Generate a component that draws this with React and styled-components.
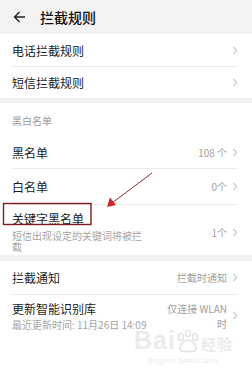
import styled, { createGlobalStyle } from "styled-components";

const GlobalStyle = createGlobalStyle`
  html, body {
    margin: 0;
    padding: 0;
    background: #f1f1f1;
  }
  body {
    font-family: "Noto Sans CJK SC", "Noto Sans", Roboto, sans-serif;
    color: #1c1c1c;
  }
`;

const Page = styled.div`
  position: relative;
  width: 252px;
  height: 385px;
  overflow: hidden;
  display: flex;
  flex-direction: column;
  background: #f1f1f1;
`;

const Header = styled.div`
  height: 34px;
  display: flex;
  align-items: center;
  padding-left: 13px;
  gap: 14px;
  background: #f3f3f3;
`;

const Title = styled.span`
  font-size: 14px;
  font-weight: 500;
  line-height: 1;
  color: #111;
`;

const Card = styled.div`
  background: #fff;
  margin-bottom: ${(p) => p.$gap || 0}px;
  flex: ${(p) => (p.$fill ? 1 : "none")};
  position: relative;
`;

const SectionLabel = styled.div`
  height: 34px;
  padding-left: 12px;
  display: flex;
  align-items: center;
  font-size: 10px;
  color: #9a9a9a;
`;

const Row = styled.div`
  height: ${(p) => p.$h}px;
  margin: 0 14px 0 12px;
  display: flex;
  align-items: center;
  justify-content: space-between;
  border-bottom: ${(p) => (p.$last ? "none" : "1px solid #ececec")};
`;

const Left = styled.div`
  display: flex;
  flex-direction: column;
  margin-top: ${(p) => p.$mt || 0}px;
`;

const Label = styled.span`
  font-size: 12px;
  line-height: 17px;
  color: #1c1c1c;
`;

const Sub = styled.span`
  max-width: ${(p) => (p.$wrap ? "136px" : "none")};
  font-size: 10px;
  line-height: ${(p) => (p.$wrap ? 11 : 14)}px;
  margin-top: ${(p) => p.$mt || 0}px;
  color: #a4a4a4;
  white-space: ${(p) => (p.$wrap ? "normal" : "nowrap")};
`;

const Right = styled.div`
  display: flex;
  align-items: center;
  gap: 5px;
  font-size: 10px;
  line-height: ${(p) => p.$lh || 13}px;
  color: #a0a0a0;
  text-align: right;
  margin-top: ${(p) => p.$mt || 0}px;
`;

const Annotation = styled.svg`
  position: absolute;
  left: 0;
  top: 0;
  pointer-events: none;
`;

const Watermark = styled.div`
  position: absolute;
  left: 134px;
  top: 328px;
  display: flex;
  flex-direction: column;
  align-items: center;
  color: #ebebeb;
  font-family: "Liberation Sans", sans-serif;
`;

const MarkTop = styled.div`
  display: flex;
  align-items: flex-end;
  font-size: 25px;
  font-weight: 700;
  line-height: 1;
  letter-spacing: 1px;
`;

const MarkCn = styled.span`
  font-family: "Noto Sans CJK SC", sans-serif;
  font-size: 15px;
  font-weight: 700;
  line-height: 1.2;
  margin-left: 1px;
`;

const MarkUrl = styled.span`
  font-size: 8px;
  margin-top: 3px;
  letter-spacing: 0.3px;
`;

const Chevron = () => (
  <svg width="6" height="9" viewBox="0 0 6 9">
    <polyline points="1.5,1 4.5,4.5 1.5,8" fill="none" stroke="#bdbdbd" strokeWidth="1.1" />
  </svg>
);

const BackArrow = () => (
  <svg width="13" height="12" viewBox="0 0 13 12">
    <path d="M12 6H1.5M6.5 1L1.5 6l5 5" fill="none" stroke="#222" strokeWidth="1.4" />
  </svg>
);

const App = () => {
  return (
    <Page>
      <GlobalStyle />
      <Header>
        <BackArrow />
        <Title>拦截规则</Title>
      </Header>

      <Card $gap={5}>
        <Row $h={32}>
          <Label>电话拦截规则</Label>
          <Right>
            <Chevron />
          </Right>
        </Row>
        <Row $h={31} $last>
          <Label>短信拦截规则</Label>
          <Right>
            <Chevron />
          </Right>
        </Row>
      </Card>

      <Card $gap={6}>
        <SectionLabel>黑白名单</SectionLabel>
        <Row $h={31}>
          <Label>黑名单</Label>
          <Right>
            108 个 <Chevron />
          </Right>
        </Row>
        <Row $h={35}>
          <Label>白名单</Label>
          <Right>
            0个 <Chevron />
          </Right>
        </Row>
        <Row $h={50} $last>
          <Left $mt={2}>
            <Label>关键字黑名单</Label>
            <Sub $wrap $mt={3}>短信出现设定的关键词将被拦截</Sub>
          </Left>
          <Right $mt={4}>
            1个 <Chevron />
          </Right>
        </Row>
      </Card>

      <Card $fill>
        <Row $h={33}>
          <Label>拦截通知</Label>
          <Right>
            拦截时通知 <Chevron />
          </Right>
        </Row>
        <Row $h={42} $last>
          <Left $mt={-1}>
            <Label>更新智能识别库</Label>
            <Sub $mt={1}>最近更新时间: 11月26日 14:09</Sub>
          </Left>
          <Right $mt={-1} $lh={15}>
            <span>
              仅连接 WLAN
              <br />时
            </span>
            <Chevron />
          </Right>
        </Row>
      </Card>

      <Watermark>
        <MarkTop>
          Bai
          <svg width="24" height="24" viewBox="0 0 24 24">
            <g fill="none" stroke="#e4e4e4" strokeWidth="1.6">
              <ellipse cx="5" cy="8" rx="2.4" ry="3.2" />
              <ellipse cx="12" cy="4.5" rx="2.4" ry="3" />
              <ellipse cx="19" cy="8" rx="2.4" ry="3.2" />
              <path d="M4 20c0-5.5 4.5-9 8-9s8 3.5 8 9c0 2.5-3.5 2.5-8 2.5s-8 0-8-2.5z" />
            </g>
          </svg>
          <MarkCn>经验</MarkCn>
        </MarkTop>
        <MarkUrl>jingyan.baidu.com</MarkUrl>
      </Watermark>

      <Annotation width="252" height="385" viewBox="0 0 252 385">
        <rect x="3.5" y="203.5" width="87.5" height="21" fill="none" stroke="#7d1a1f" strokeWidth="1.4" />
        <line x1="152" y1="173" x2="112" y2="203" stroke="#8a2a30" strokeWidth="1" />
        <polygon points="107,207 110,197.5 116,205" fill="#d42027" />
      </Annotation>
    </Page>
  );
};

export default App;
